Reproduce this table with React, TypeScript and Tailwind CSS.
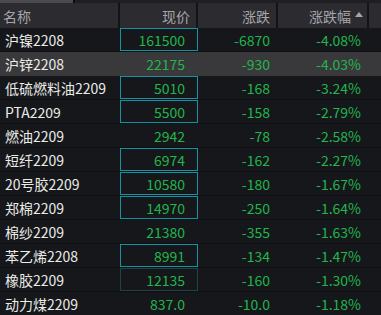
type Row = {
  name: string
  price: string
  change: string
  pct: string
  box?: 'on' | 'dim'
}

const rows: Row[] = [
  { name: '沪镍2208', price: '161500', change: '-6870', pct: '-4.08%', box: 'on' },
  { name: '沪锌2208', price: '22175', change: '-930', pct: '-4.03%' },
  { name: '低硫燃料油2209', price: '5010', change: '-168', pct: '-3.24%', box: 'on' },
  { name: 'PTA2209', price: '5500', change: '-158', pct: '-2.79%', box: 'on' },
  { name: '燃油2209', price: '2942', change: '-78', pct: '-2.58%' },
  { name: '短纤2209', price: '6974', change: '-162', pct: '-2.27%', box: 'on' },
  { name: '20号胶2209', price: '10580', change: '-180', pct: '-1.67%', box: 'on' },
  { name: '郑棉2209', price: '14970', change: '-250', pct: '-1.64%', box: 'on' },
  { name: '棉纱2209', price: '21380', change: '-355', pct: '-1.63%' },
  { name: '苯乙烯2208', price: '8991', change: '-134', pct: '-1.47%', box: 'on' },
  { name: '橡胶2209', price: '12135', change: '-160', pct: '-1.30%', box: 'dim' },
  { name: '动力煤2209', price: '837.0', change: '-10.0', pct: '-1.18%' },
]

const cols = 'grid grid-cols-[120px_78px_80px_91px_12px]'

export default function App() {
  return (
    <div
      className="w-[381px] h-[315px] overflow-hidden bg-[#15171b] text-[14px] leading-none"
      style={{ fontFamily: '"Noto Sans CJK SC", "Noto Sans", sans-serif' }}
    >
      {/* tab strip, cut off */}
      <div className="flex h-[3px]">
        <div className="w-[73px] bg-[#4a4a50]" />
        <div className="w-[2px] bg-[#0b0b0d]" />
        <div className="flex-1 bg-[#1f1f23]" />
      </div>

      {/* Header */}
      <div className={`${cols} h-[25px] bg-[#2b2b30] text-[#a5a5ac]`}>
        <div className="flex items-center pl-[3px] border-r-2 border-[#141417]">名称</div>
        <div className="flex items-center justify-end pr-[6px] border-r-2 border-[#141417]">现价</div>
        <div className="flex items-center justify-end pr-[6px] border-r-2 border-[#141417]">涨跌</div>
        <div className="flex items-center justify-end pr-[4px] border-r-2 border-[#141417]">
          涨跌幅
          <span className="ml-[4px] mb-[2px] w-0 h-0 border-l-[4px] border-r-[4px] border-b-[5px] border-l-transparent border-r-transparent border-b-[#a5a5ac]" />
        </div>
        <div />
      </div>

      {/* Rows */}
      {rows.map((r, i) => (
        <div
          key={r.name}
          className={`${cols} h-[24px] ${i === 1 ? 'bg-[#39393c]' : 'border-b border-[#0f1013]'}`}
        >
          <div className="flex items-center pl-[5px] text-[#ecebe7] whitespace-nowrap">{r.name}</div>
          <div
            className={`flex items-center justify-end pr-[12px] text-[#22b54c] ${
              r.box === 'on'
                ? 'border border-[#1293a4]'
                : r.box === 'dim'
                ? 'border border-[#1f4347]'
                : 'border border-transparent'
            }`}
          >
            {r.price}
          </div>
          <div className="flex items-center justify-end pr-[8px] text-[#22b54c]">{r.change}</div>
          <div className="flex items-center justify-end pr-[8px] text-[#22b54c]">{r.pct}</div>
          <div />
        </div>
      ))}
    </div>
  )
}
